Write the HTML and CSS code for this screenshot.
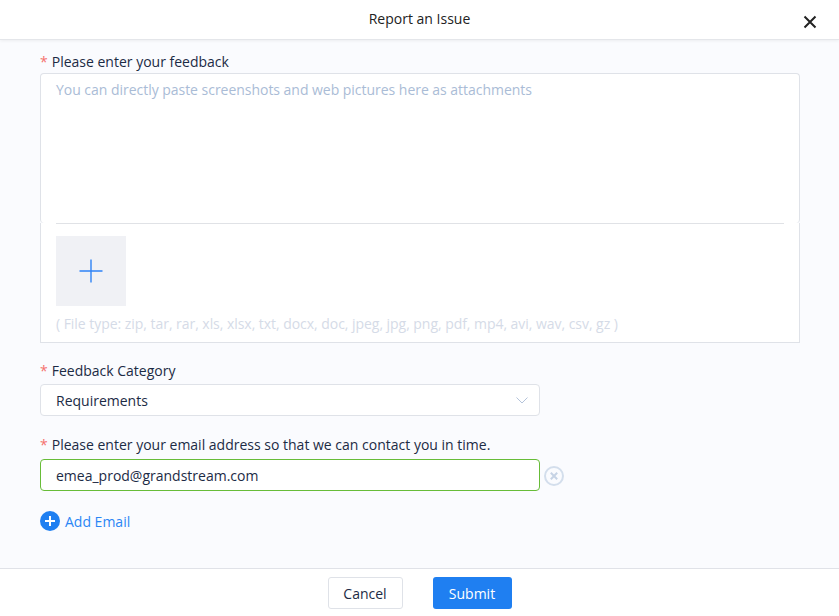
FILE: index.html
```html
<!DOCTYPE html>
<html lang="en">

<head>
    <meta charset="UTF-8">
    <meta name="viewport" content="width=device-width, initial-scale=1.0">
    <title>Report an Issue</title>
    <link rel="stylesheet" href="styles.css">
</head>

<body>

    <div class="dialog">
        <!-- Header -->
        <header class="dialog-header">
            <h1>Report an Issue</h1>
            <button class="close-btn" aria-label="Close">
                <svg width="14" height="14" viewBox="0 0 14 14">
                    <path d="M1.5 1.5L12.5 12.5M12.5 1.5L1.5 12.5" stroke="#222" stroke-width="2" fill="none" />
                </svg>
            </button>
        </header>

        <main class="dialog-body">
            <!-- Feedback -->
            <div class="field field-feedback">
                <label class="field-label"><span class="required">*</span>Please enter your feedback</label>
                <div class="feedback-box">
                    <textarea class="feedback-text"
                        placeholder="You can directly paste screenshots and web pictures here as attachments"></textarea>
                    <div class="attachments">
                        <div class="attachments-inner">
                            <div class="upload-tile">
                                <svg width="24" height="24" viewBox="0 0 24 24">
                                    <path d="M12 0.5V23.5M0.5 12H23.5" stroke="#2e83f6" stroke-width="1.4" fill="none" />
                                </svg>
                            </div>
                            <p class="file-types">( File type: zip, tar, rar, xls, xlsx, txt, docx, doc, jpeg, jpg, png, pdf, mp4, avi, wav, csv, gz )</p>
                        </div>
                    </div>
                </div>
            </div>

            <!-- Category -->
            <div class="field field-category">
                <label class="field-label"><span class="required">*</span>Feedback Category</label>
                <div class="select-box">
                    <span>Requirements</span>
                    <svg width="12" height="7" viewBox="0 0 12 7">
                        <path d="M0.5 0.5L6 6L11.5 0.5" stroke="#b4c3da" stroke-width="1" fill="none" />
                    </svg>
                </div>
            </div>

            <!-- Email -->
            <div class="field field-email">
                <label class="field-label"><span class="required">*</span>Please enter your email address so that we can contact you in time.</label>
                <div class="email-row">
                    <input class="email-input" type="text" value="emea_prod@grandstream.com">
                    <svg class="email-remove" width="20" height="20" viewBox="0 0 20 20">
                        <circle cx="10" cy="10" r="9" stroke="#d3deec" stroke-width="2" fill="none" />
                        <path d="M6.8 6.8L13.2 13.2M13.2 6.8L6.8 13.2" stroke="#c6d3e5" stroke-width="2" fill="none" />
                    </svg>
                </div>
            </div>

            <a class="add-email" href="#add">
                <svg width="20" height="20" viewBox="0 0 20 20">
                    <circle cx="10" cy="10" r="10" fill="#1f7ff1" />
                    <path d="M10 5V15M5 10H15" stroke="#fff" stroke-width="2" fill="none" />
                </svg>
                Add Email
            </a>
        </main>

        <!-- Footer -->
        <footer class="dialog-footer">
            <button class="btn btn-cancel">Cancel</button>
            <button class="btn btn-submit">Submit</button>
        </footer>
    </div>

</body>

</html>
```

FILE: styles.css
```css
* {
    margin: 0;
    padding: 0;
    box-sizing: border-box;
}

body {
    font-family: "Open Sans", Arial, sans-serif;
    font-size: 14px;
    color: #1c2b45;
    background-color: #fff;
}

.dialog {
    height: 616px;
    display: flex;
    flex-direction: column;
}

/* Header */
.dialog-header {
    height: 40px;
    flex: none;
    display: flex;
    align-items: center;
    justify-content: center;
    background-color: #fff;
    border-bottom: 1px solid #e4e6ea;
    box-shadow: 0 1px 3px rgba(0, 0, 0, 0.06);
    position: relative;
}

.dialog-header h1 {
    font-size: 14px;
    font-weight: 400;
    color: #222;
    line-height: 38px;
    height: 39px;
}

.close-btn {
    position: absolute;
    right: 22px;
    top: 14.5px;
    width: 14px;
    height: 14px;
    border: none;
    background: none;
    display: flex;
}

/* Body */
.dialog-body {
    flex: 1;
    background-color: #fafbfe;
    padding: 11px 39px 0 40px;
}

.field-label {
    display: block;
    line-height: 22px;
    height: 22px;
    color: #1c2b45;
}

.required {
    color: #f5716f;
    margin-right: 4px;
}

.feedback-box {
    height: 270px;
    display: flex;
    flex-direction: column;
}

.feedback-text {
    display: block;
    width: 100%;
    height: 150px;
    flex: none;
    resize: none;
    outline: none;
    background-color: #fff;
    border: 1px solid #dfe2e8;
    border-bottom: none;
    border-radius: 4px;
    padding: 5px 15px;
    font-family: inherit;
    font-size: 14px;
    line-height: 22px;
}

.feedback-text::placeholder {
    color: #aabcd6;
    opacity: 1;
    letter-spacing: -0.03px;
}

.attachments {
    flex: 1;
    background-color: #fff;
    border: 1px solid #dfe2e8;
    border-top: none;
    padding: 0 15px;
}

.attachments-inner {
    border-top: 1px solid #e0e2e6;
    padding-top: 12px;
}

.upload-tile {
    width: 70px;
    height: 70px;
    background-color: #f0f1f5;
    display: flex;
    align-items: center;
    justify-content: center;
}

.file-types {
    margin-top: 7px;
    line-height: 22px;
    color: #d5dbe7;
    letter-spacing: -0.04px;
}

.field-category {
    margin-top: 17px;
}

.field-category .field-label {
    margin-bottom: 2px;
}

.field-email .field-label {
    margin-bottom: 3px;
}

.select-box {
    width: 500px;
    height: 32px;
    display: flex;
    align-items: center;
    justify-content: space-between;
    background-color: #fff;
    border: 1px solid #dfe2e8;
    border-radius: 4px;
    padding: 0 11px 0 15px;
}

.field-email {
    margin-top: 18px;
}

.email-row {
    display: flex;
    align-items: center;
    gap: 4px;
}

.email-input {
    width: 500px;
    height: 32px;
    background-color: #fff;
    border: 1px solid #67bc38;
    border-radius: 4px;
    padding: 0 15px;
    outline: none;
    font-family: inherit;
    font-size: 14px;
    color: #1c2b45;
}

.email-remove {
    margin-top: 2px;
}

.add-email {
    display: inline-flex;
    align-items: center;
    gap: 5px;
    margin-top: 20px;
    height: 20px;
    color: #2a86f5;
    text-decoration: none;
}

/* Footer */
.dialog-footer {
    height: 48px;
    flex: none;
    display: flex;
    justify-content: center;
    gap: 30px;
    padding-top: 8px;
    background-color: #fff;
    border-top: 1px solid #e0e2e8;
}

.btn {
    height: 32px;
    border-radius: 3px;
    font-family: inherit;
    font-size: 14px;
}

.btn-cancel {
    width: 75px;
    background-color: #fff;
    border: 1px solid #dfe2e8;
    color: #1c2b45;
}

.btn-submit {
    width: 79px;
    background-color: #1f7ff1;
    border: none;
    color: #fff;
}
```
